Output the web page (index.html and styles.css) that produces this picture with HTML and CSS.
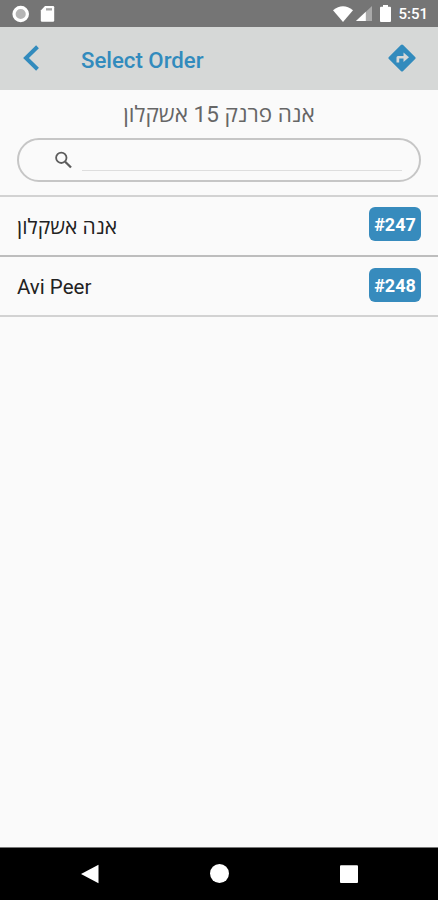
FILE: index.html
```html
<!DOCTYPE html>
<html lang="en">
<head>
    <meta charset="UTF-8">
    <meta name="viewport" content="width=device-width, initial-scale=1.0">
    <title>Select Order</title>
    <link rel="stylesheet" href="styles.css">
</head>
<body>

<div class="status-bar">
    <svg class="status-circle" width="18" height="18" viewBox="0 0 18 18">
        <circle cx="8.700" cy="9" r="6.700" fill="#b5b5b5" stroke="#fff" stroke-width="3.200"/>
    </svg>
    <svg class="status-card" width="15" height="18" viewBox="0 0 15 18">
        <path d="M5 1h8q1.200 0 1.200 1.200v13.400q0 1.200-1.200 1.200H2q-1.200 0-1.200-1.200V5.500z" fill="#fff"/>
        <path d="M6 3.200h6v2.300H6z" fill="#a5a5a5"/>
    </svg>
    <div class="status-right">
        <svg class="wifi" width="20" height="16" viewBox="0 0 20 16">
            <path d="M0 4.200Q10-3.600 20 4.200L10 16z" fill="#fff"/>
        </svg>
        <svg class="signal" width="16" height="15" viewBox="0 0 16 15">
            <path d="M16 0v15H0z" fill="#a9a9a9"/>
            <path d="M9.800 5.800V15H0z" fill="#fff"/>
        </svg>
        <svg class="battery" width="11" height="17" viewBox="0 0 11 17">
            <path d="M3 0h5v1.700h2q1 0 1 1V16q0 1-1 1H1q-1 0-1-1V2.700q0-1 1-1h2z" fill="#fff"/>
        </svg>
        <span class="clock">5:51</span>
    </div>
</div>

<header class="toolbar">
    <svg class="back" width="18" height="28" viewBox="0 0 18 28">
        <path d="M15.500 2.800 4 14l11.500 11.200" fill="none" stroke="#328bbd" stroke-width="4"/>
    </svg>
    <h1>Select Order</h1>
    <svg class="directions" width="28" height="28" viewBox="0 0 28 28">
        <path d="M12.900.900q1.100-1 2.200 0l12 12q1 1.100 0 2.200l-12 12q-1.100 1-2.200 0l-12-12q-1-1.100 0-2.200z" fill="#328bbd"/>
        <path d="M8.500 18.500v-5q0-1.500 1.500-1.500h5.500V8.500l5.500 4.800-5.500 4.700v-3.500h-4.300v4z" fill="#d6d8d7"/>
    </svg>
</header>

<section class="search-panel">
    <h2 dir="rtl">אנה פרנק 15 אשקלון</h2>
    <label class="search-box">
        <svg width="18" height="18" viewBox="0 0 18 18">
            <circle cx="6.300" cy="6.800" r="5.200" fill="none" stroke="#5c5c5c" stroke-width="1.800"/>
            <path d="m10.200 10.700 5.800 5.800" stroke="#5c5c5c" stroke-width="2.300"/>
        </svg>
        <input type="text" aria-label="Search">
    </label>
</section>

<ul class="orders">
    <li class="order">
        <span class="name" lang="he">אנה אשקלון</span>
        <span class="badge">#247</span>
    </li>
    <li class="order">
        <span class="name">Avi Peer</span>
        <span class="badge">#248</span>
    </li>
</ul>

<nav class="nav-bar">
    <svg width="20" height="20" viewBox="0 0 20 20"><path d="M18.500.800v18.400L1 10z" fill="#fff"/></svg>
    <svg width="20" height="20" viewBox="0 0 20 20"><circle cx="9.500" cy="9.500" r="9.500" fill="#fff"/></svg>
    <svg width="20" height="20" viewBox="0 0 20 20"><rect x="1" y="1.300" width="18" height="17.700" rx="1" fill="#fff"/></svg>
</nav>

</body>
</html>
```

FILE: styles.css
```css
* {
    box-sizing: border-box;
}

body {
    font-family: Roboto, "Open Sans", "Noto Sans", sans-serif;
    background-color: #fafafa;
    margin: 0;
    display: flex;
    flex-direction: column;
    height: 100vh;
}

svg {
    display: block;
    flex-shrink: 0;
}

.status-bar {
    height: 27px;
    background-color: #757575;
    display: flex;
    align-items: center;
    padding: 0 10px 0 12px;
}

.status-card {
    margin-left: 10px;
}

.status-right {
    display: flex;
    align-items: center;
    margin-left: auto;
}

.signal {
    margin-left: 3px;
}

.battery {
    margin-left: 8px;
}

.clock {
    color: white;
    font-size: 15px;
    font-weight: 500;
    line-height: 27px;
    margin-left: 7px;
    padding-top: 1px;
}

.toolbar {
    height: 63px;
    background-color: #d6d8d7;
    display: flex;
    align-items: center;
    padding: 0 22px;
}

.back {
    margin-bottom: 1px;
}

.toolbar h1 {
    color: #328bbd;
    font-size: 22.2px;
    font-weight: 500;
    line-height: 30px;
    margin: 3px 0 0 41px;
}

.directions {
    margin-left: auto;
    margin-bottom: 1px;
}

.search-panel {
    height: 107px;
    padding: 9px 17px 0;
    border-bottom: 2px solid #d2d2d2;
}

.search-panel h2 {
    color: #666;
    font-size: 22.5px;
    font-weight: 400;
    line-height: 30px;
    text-align: center;
    margin: 0 0 9px;
}

.search-box {
    height: 44px;
    border: 2px solid #c6c6c6;
    border-radius: 22px;
    display: flex;
    align-items: center;
    padding: 0 17px 0 36px;
}

.search-box input {
    flex: 1;
    min-width: 0;
    height: 22px;
    margin: 0 0 0 9px;
    padding: 0;
    border: none;
    border-bottom: 1px solid #dedede;
    background: none;
    outline: none;
}

.orders {
    list-style: none;
    margin: 0;
    padding: 0;
    flex: 1;
}

.order {
    height: 60px;
    border-bottom: 2px solid #bdbdbd;
    display: flex;
    align-items: center;
    justify-content: space-between;
    padding: 0 17px;
}

.order:last-child {
    border-bottom-color: #d2d2d2;
}

.name {
    color: #222;
    font-size: 20.5px;
    line-height: 28px;
    padding-top: 2px;
}

.name:lang(he) {
    font-size: 21px;
    padding-top: 1px;
}

.badge {
    width: 52px;
    height: 34px;
    margin-bottom: 3px;
    border-radius: 6px;
    background-color: #378bbd;
    color: white;
    font-size: 18px;
    font-weight: 700;
    line-height: 35px;
    text-align: center;
}

.order:first-child .badge {
    margin-bottom: 5px;
}

.nav-bar {
    height: 53px;
    background-color: black;
    border-top: 1px solid #777;
    display: flex;
    align-items: center;
    justify-content: space-between;
    padding: 0 79px 0 80px;
}
```
